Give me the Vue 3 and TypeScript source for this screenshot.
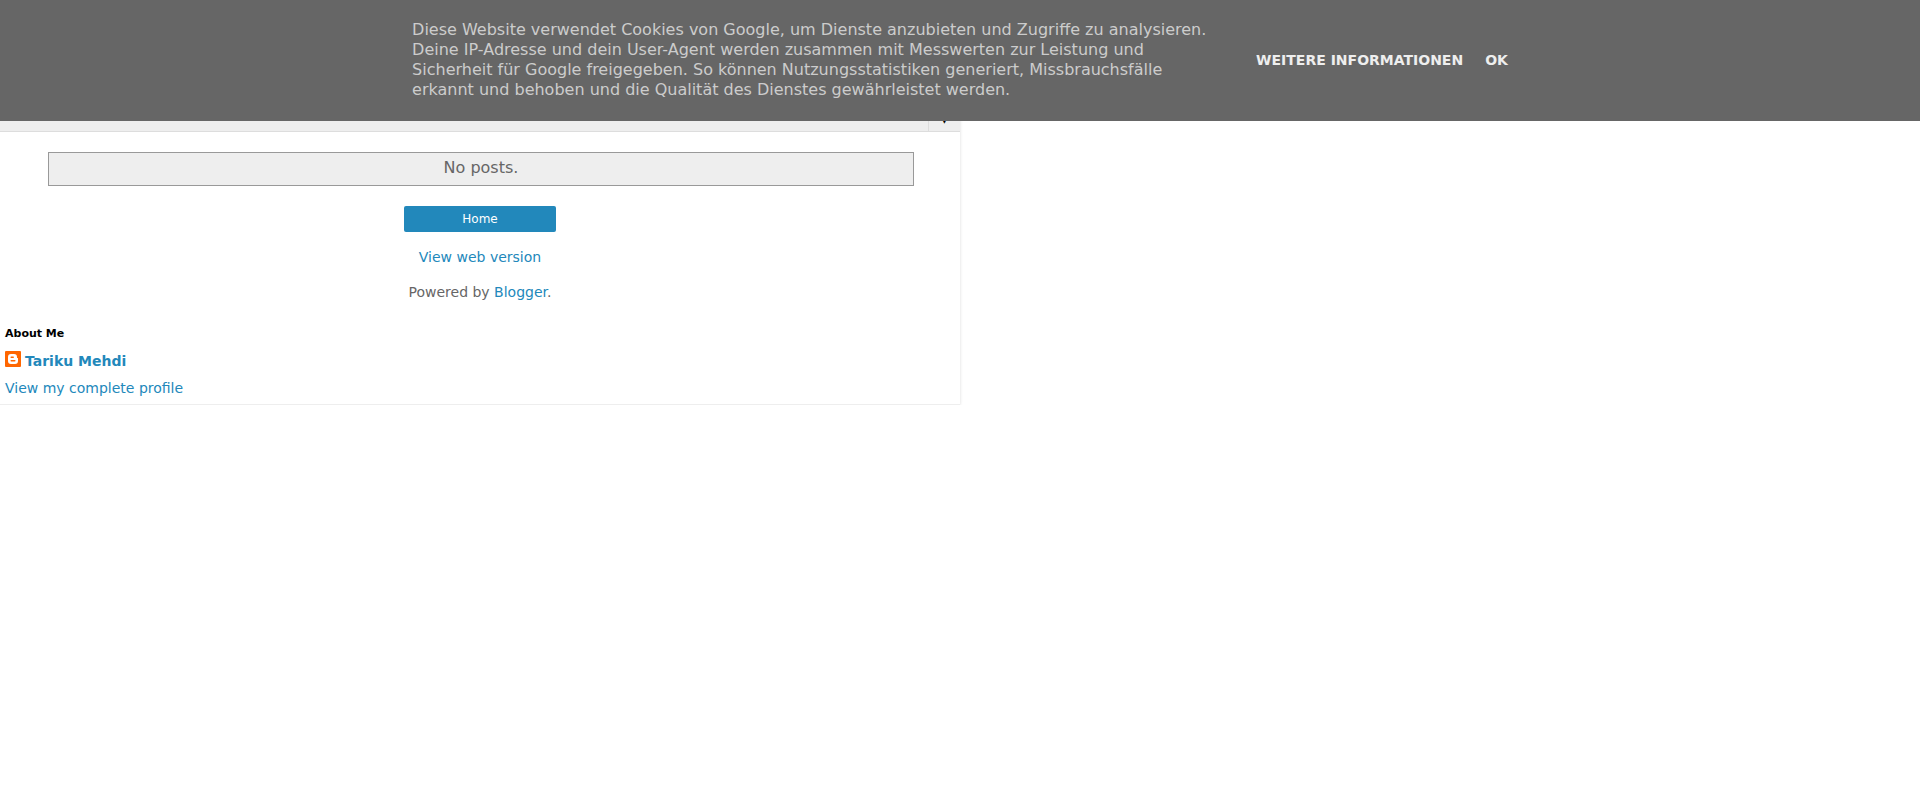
<script setup lang="ts">
const notice: string =
  'Diese Website verwendet Cookies von Google, um Dienste anzubieten und Zugriffe zu analysieren. Deine IP-Adresse und dein User-Agent werden zusammen mit Messwerten zur Leistung und Sicherheit für Google freigegeben. So können Nutzungsstatistiken generiert, Missbrauchsfälle erkannt und behoben und die Qualität des Dienstes gewährleistet werden.'
</script>

<template>
  <div class="page">
    <aside class="cookie-bar">
      <p class="cookie-text">{{ notice }}</p>
      <div class="cookie-actions">
        <a href="#">WEITERE INFORMATIONEN</a>
        <button type="button">OK</button>
      </div>
    </aside>

    <div class="content">
      <nav class="tabs">
        <button type="button" class="tabs-toggle" aria-label="Pages">▼</button>
      </nav>
      <main class="blog">
        <div class="status">No posts.</div>
        <a class="home" href="#">Home</a>
        <a class="line" href="#">View web version</a>
        <div class="line powered">Powered by <a href="#">Blogger</a>.</div>
      </main>
      <section class="profile">
        <h2>About Me</h2>
        <a class="author" href="#">
          <svg viewBox="0 0 16 16" width="16" height="16" aria-hidden="true">
            <rect width="16" height="16" rx="1" fill="#ff6600" />
            <path
              fill="#fff"
              fill-rule="evenodd"
              d="M6 3h3a3 3 0 0 1 3 3v.4c0 .4.3.6.6.6.3 0 .4.2.4.5V10a3 3 0 0 1-3 3H6a3 3 0 0 1-3-3V6a3 3 0 0 1 3-3zm.2 2.500a.7.7 0 0 0 0 1.500h2a.7.7 0 0 0 0-1.500zm0 3.500a.7.7 0 0 0 0 1.500h3.600a.7.7 0 0 0 0-1.500z"
            />
          </svg>
          <span>Tariku Mehdi</span>
        </a>
        <a class="full-profile" href="#">View my complete profile</a>
      </section>
    </div>
  </div>
</template>

<style>
body {
  background: #fff;
}
</style>

<style scoped>
.page {
  font-family: "DejaVu Sans", sans-serif;
  font-size: 14px;
  line-height: 17px;
  color: #666;
}
a {
  color: #2288bb;
  text-decoration: none;
}
.cookie-bar {
  position: fixed;
  top: 0;
  left: 0;
  right: 0;
  z-index: 1;
  display: flex;
  justify-content: center;
  align-items: center;
  gap: 32px;
  padding: 20px 0 21px;
  background: #666;
}
.cookie-text {
  margin: 0;
  width: 812px;
  font-size: 16px;
  line-height: 20px;
  color: #ccc;
}
.cookie-actions {
  display: flex;
  gap: 22px;
}
.cookie-actions a,
.cookie-actions button {
  padding: 0;
  border: 0;
  background: none;
  font: bold 14px/17px "DejaVu Sans", sans-serif;
  color: #eee;
}
.content {
  width: 50%;
  padding-top: 100px;
  border-bottom: 1px solid #eee;
  box-shadow: 0 0 3px rgba(0, 0, 0, 0.15);
}
.tabs {
  display: flex;
  justify-content: flex-end;
  background: #eee;
  border-bottom: 1px solid #ddd;
}
.tabs-toggle {
  width: 32px;
  height: 31px;
  padding: 3px 0 0;
  border: 0;
  border-left: 1px solid #ddd;
  background: none;
  font: 14px/28px "DejaVu Sans", sans-serif;
  color: #000;
}
.blog {
  display: flex;
  flex-direction: column;
  align-items: center;
  padding: 20px 48px 0;
}
.status {
  align-self: flex-start;
  width: 100%;
  padding: 6px 0 8px;
  border: 1px solid #999;
  background: #eee;
  font-size: 16px;
  line-height: 18px;
  text-align: center;
}
.home {
  width: 152px;
  margin-top: 20px;
  border-radius: 2px;
  background: #2288bb;
  color: #fff;
  font-size: 12px;
  line-height: 26px;
  text-align: center;
}
.line {
  margin-top: 17px;
}
.powered {
  margin-top: 18px;
}
.profile {
  padding: 25px 5px 7px;
}
h2 {
  margin: 0 0 10px;
  font-size: 11px;
  line-height: 15px;
  color: #000;
}
.author {
  display: flex;
  gap: 4px;
  margin-bottom: 10px;
  font-weight: bold;
}
.author span {
  padding-top: 2px;
}
.full-profile {
  display: block;
}
</style>
